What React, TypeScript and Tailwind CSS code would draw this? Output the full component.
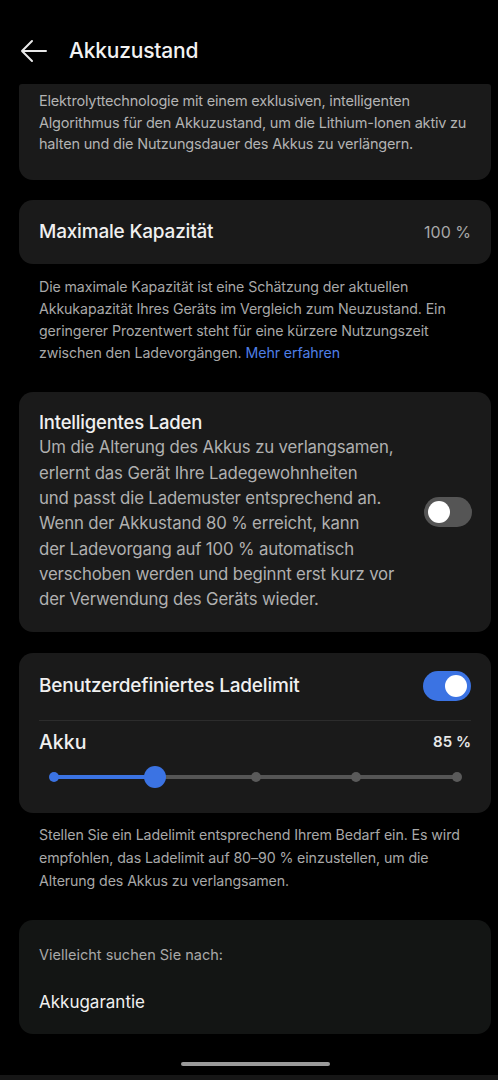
import React from "react";

const font = { fontFamily: "Inter, Roboto, 'Noto Sans', sans-serif" };

function Toggle({ on }: { on: boolean }) {
  return (
    <div
      className={`relative h-[30px] w-[48px] shrink-0 rounded-full ${on ? "bg-[#3b73e3]" : "bg-[#555555]"}`}
    >
      <div
        className={`absolute top-[4px] h-[22px] w-[22px] rounded-full bg-white ${on ? "left-[22px]" : "left-[4px]"}`}
      />
    </div>
  );
}

export default function App() {
  return (
    <div className="relative h-[1080px] w-[498px] overflow-hidden bg-black text-white" style={font}>
      {/* Header */}
      <div className="flex h-[84px] items-center pl-[20px] pt-[18px]">
        <svg width="28" height="24" viewBox="0 0 28 24" fill="none" stroke="#e8e8e8" strokeWidth="2" strokeLinecap="round" strokeLinejoin="round">
          <path d="M26 12H2M12 2L2 12l10 10" />
        </svg>
        <div className="ml-[21px] text-[21px] font-medium tracking-[-0.2px] text-[#f2f2f2]">Akkuzustand</div>
      </div>

      <div className="pl-[19px] pr-[7px]">
        {/* Card 1 (scrolled) */}
        <div className="h-[96px] rounded-b-[14px] rounded-t-[3px] bg-[#1a1a1a] px-[20px] pt-[6px]">
          <p className="whitespace-nowrap text-[14.5px] leading-[21.5px] tracking-[-0.2px] text-[#b3b3b3]">
            Elektrolyttechnologie mit einem exklusiven, intelligenten<br />
            Algorithmus für den Akkuzustand, um die Lithium-Ionen aktiv zu<br />
            halten und die Nutzungsdauer des Akkus zu verlängern.
          </p>
        </div>

        {/* Card 2 */}
        <div className="mt-[20px] flex h-[64px] items-center justify-between rounded-[14px] bg-[#1a1a1a] px-[20px]">
          <span className="text-[19px] font-medium tracking-[-0.2px] text-[#f0f0f0]">Maximale Kapazität</span>
          <span className="text-[16px] text-[#a8a8a8]">100 %</span>
        </div>
        <p className="mt-[12px] px-[20px] text-[14.2px] leading-[22px] tracking-[-0.1px] text-[#a8a8a8]">
          Die maximale Kapazität ist eine Schätzung der aktuellen Akkukapazität Ihres Geräts im Vergleich zum Neuzustand. Ein geringerer Prozentwert steht für eine kürzere Nutzungszeit zwischen den Ladevorgängen.{" "}
          <span className="text-[#4f7fe6]">Mehr erfahren</span>
        </p>

        {/* Card 3 */}
        <div className="mt-[28px] flex h-[240px] items-center rounded-[14px] bg-[#1a1a1a] pl-[20px] pr-[19px]">
          <div className="w-[360px] pb-[2px]">
            <div className="text-[18.5px] font-medium leading-[26px] tracking-[-0.2px] text-[#f0f0f0]">Intelligentes Laden</div>
            <p className="text-[16.8px] leading-[25.3px] tracking-[-0.15px] text-[#b0b0b0]">
              Um die Alterung des Akkus zu verlangsamen,<br />
              erlernt das Gerät Ihre Ladegewohnheiten<br />
              und passt die Lademuster entsprechend an.<br />
              Wenn der Akkustand 80 % erreicht, kann<br />
              der Ladevorgang auf 100 % automatisch<br />
              verschoben werden und beginnt erst kurz vor<br />
              der Verwendung des Geräts wieder.
            </p>
          </div>
          <div className="ml-auto">
            <Toggle on={false} />
          </div>
        </div>

        {/* Card 4 */}
        <div className="mt-[21px] h-[160px] rounded-[14px] bg-[#1a1a1a] px-[20px] pt-[16px]">
          <div className="flex h-[34px] items-center justify-between">
            <span className="text-[19px] font-medium tracking-[-0.2px] text-[#f0f0f0]">Benutzerdefiniertes Ladelimit</span>
            <Toggle on={true} />
          </div>
          <div className="mt-[17px] h-px bg-[#2c2c2c]" />
          <div className="mt-[8px] flex items-center justify-between">
            <span className="text-[19.5px] font-medium leading-[26px] text-[#f0f0f0]">Akku</span>
            <span className="text-[15px] font-semibold text-[#e8e8e8]">85 %</span>
          </div>
          {/* Slider */}
          <div className="relative mx-[15px] mt-[11px] h-[22px]">
            <div className="absolute left-0 right-0 top-[9px] h-[4px] rounded-full bg-[#555555]" />
            <div className="absolute left-0 top-[9px] h-[4px] w-[101px] bg-[#3b73e3]" />
            <div className="absolute left-[-5px] top-[6px] h-[10px] w-[10px] rounded-full bg-[#3b73e3]" />
            <div className="absolute left-[197px] top-[6px] h-[10px] w-[10px] rounded-full bg-[#5a5a5a]" />
            <div className="absolute left-[297px] top-[6px] h-[10px] w-[10px] rounded-full bg-[#5a5a5a]" />
            <div className="absolute left-[398px] top-[6px] h-[10px] w-[10px] rounded-full bg-[#5a5a5a]" />
            <div className="absolute left-[90px] top-0 h-[22px] w-[22px] rounded-full bg-[#3b73e3]" />
          </div>
        </div>
        <p className="mt-[10px] px-[20px] text-[14.2px] leading-[23px] tracking-[-0.1px] text-[#a8a8a8]">
          Stellen Sie ein Ladelimit entsprechend Ihrem Bedarf ein. Es wird empfohlen, das Ladelimit auf 80–90 % einzustellen, um die Alterung des Akkus zu verlangsamen.
        </p>

        {/* Card 5 */}
        <div className="mt-[28px] h-[114px] rounded-[14px] bg-[#131514] px-[20px] pt-[24px]">
          <div className="text-[14.5px] leading-[22px] text-[#a8a8a8]">Vielleicht suchen Sie nach:</div>
          <div className="mt-[24px] text-[17px] leading-[24px] text-[#f0f0f0]">Akkugarantie</div>
        </div>
      </div>

      {/* Home indicator */}
      <div className="absolute left-[181px] top-[1062px] h-[4px] w-[149px] rounded-full bg-[#9a9a9a]" />
      <div className="absolute bottom-0 left-0 h-[5px] w-full bg-[#161616]" />
    </div>
  );
}
